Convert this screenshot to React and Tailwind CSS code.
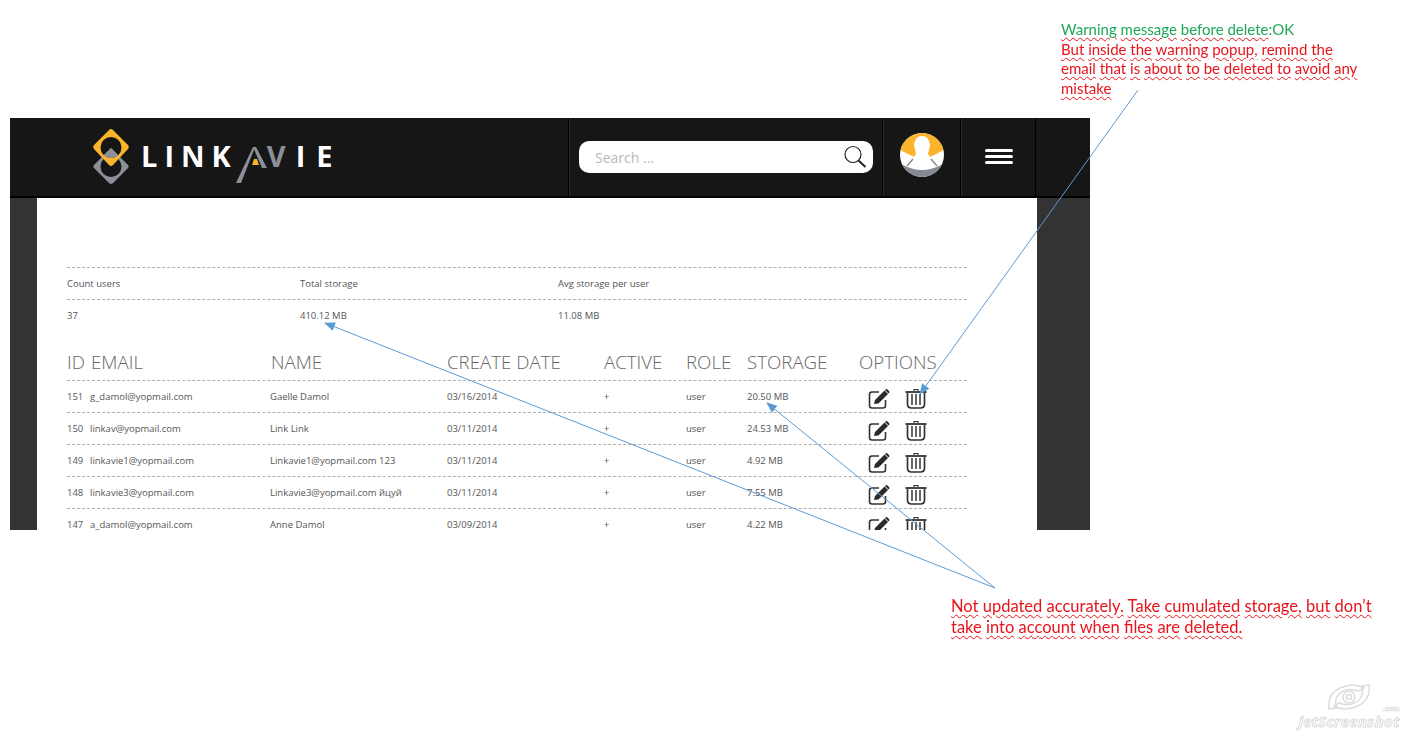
import React from 'react';

const users = [
    { id: 151, email: 'g_damol@yopmail.com', name: 'Gaelle Damol', date: '03/16/2014', storage: '20.50 MB' },
    { id: 150, email: 'linkav@yopmail.com', name: 'Link Link', date: '03/11/2014', storage: '24.53 MB' },
    { id: 149, email: 'linkavie1@yopmail.com', name: 'Linkavie1@yopmail.com 123', date: '03/11/2014', storage: '4.92 MB' },
    { id: 148, email: 'linkavie3@yopmail.com', name: 'Linkavie3@yopmail.com йцуй', date: '03/11/2014', storage: '7.55 MB' },
    { id: 147, email: 'a_damol@yopmail.com', name: 'Anne Damol', date: '03/09/2014', storage: '4.22 MB' },
];

const columns = 'grid grid-cols-[24px_180px_176px_157px_82px_61px_112px_108px]';

const LogoMark = () => (
    <svg width="38" height="56" viewBox="0 0 38 56" className="shrink-0">
        <path fillRule="evenodd" fill="#8b8f98" d="M19 19 L36 36 Q37.5 37.500 36 39 L21 54 Q19 56 17 54 L2 39 Q0.500 37.500 2 36 Z M19 27 A10.500 10.500 0 1 0 19 48 A10.500 10.500 0 1 0 19 27 Z" />
        <path fillRule="evenodd" fill="#fbb42c" d="M17 1 Q19 -1 21 1 L36 16 Q37.500 18 36 20 L21 36 Q19 38 17 36 L2 20 Q0.500 18 2 16 Z M19 8 A10.500 10.500 0 1 0 19 29 A10.500 10.500 0 1 0 19 8 Z" />
        <path fill="#8b8f98" d="M19 19 L26 26 Q24 29 19 29 Q14 29 12 26 Z" />
    </svg>
);

// the stylised A of the wordmark, a slash with a small yellow wedge
const LogoSlash = () => (
    <svg width="37" height="38" viewBox="0 0 37 38" className="shrink-0 mt-[9px] -ml-[4px]">
        <path d="M2 37 L19 1 L21 1 L7 37 Z" fill="#8b8f98" />
        <path d="M19 1 L22 1 L33 22 L28 22 Z" fill="#8b8f98" />
        <path d="M20 13 L23 13 L25 19 L18 19 Z" fill="#fbb42c" />
    </svg>
);

const Avatar = () => (
    <svg width="44" height="44" viewBox="0 0 44 44">
        <defs>
            <clipPath id="avatar-clip"><circle cx="22" cy="22" r="22" /></clipPath>
        </defs>
        <g clipPath="url(#avatar-clip)">
            <rect width="44" height="44" fill="#ffffff" />
            <path d="M0 0 H44 V17 L30 24 H14 L0 17 Z" fill="#fbb42c" />
            <path d="M14 12 Q15 3 22 3 Q29 3 30 12 L28 21 L31 25 L22 34 L13 25 L16 21 Z" fill="#ffffff" />
            <path d="M7 33 L13 26 M37 33 L31 26" stroke="#868a93" strokeWidth="1.500" fill="none" />
            <path d="M3 32 Q22 42 41 32 L44 44 H0 Z" fill="#868a93" />
        </g>
    </svg>
);

const EditIcon = () => (
    <svg width="22" height="22" viewBox="0 0 22 22">
        <path d="M11 4 H4 Q1.500 4 1.500 6.500 V17.500 Q1.500 20 4 20 H15 Q17.500 20 17.500 17.500 V12" fill="none" stroke="#333" strokeWidth="1.600" />
        <path d="M6 16 L7 12 L16.500 2.500 L20 6 L10.500 15.500 Z" fill="#2b2b2b" />
        <path d="M17.500 1.500 Q18.500 0.500 19.500 1.500 L21 3 Q22 4 21 5 L20.500 5.500 L17 2 Z" fill="#2b2b2b" />
    </svg>
);

const TrashIcon = () => (
    <svg width="22" height="22" viewBox="0 0 22 22" fill="none" stroke="#333">
        <path d="M0.500 4 H21.500" strokeWidth="1.800" />
        <path d="M9 3 V1.500 H13 V3" strokeWidth="1.200" />
        <path d="M2.500 5 V16 Q2.500 20 6.500 20 H15.500 Q19.500 20 19.500 16 V5" strokeWidth="1.700" />
        <path d="M7 6 V17 M11 6 V17 M15 6 V17" strokeWidth="1.500" />
    </svg>
);

const SearchIcon = () => (
    <svg width="24" height="24" viewBox="0 0 24 24" fill="none" stroke="#222">
        <circle cx="10" cy="9.500" r="8" strokeWidth="1.200" />
        <path d="M15.500 15.500 L22.500 22" strokeWidth="2" />
    </svg>
);

// spell checker squiggle, word by word so the gaps stay clean
const Squiggly = ({ text }) =>
    text.split(' ').map((word, i) => (
        <span key={i}>
            <span className="underline decoration-wavy decoration-1 underline-offset-2 decoration-[#e8141c]">{word}</span>{' '}
        </span>
    ));

const Arrows = () => (
    <svg width="1406" height="734" viewBox="0 0 1406 734" className="absolute inset-0 pointer-events-none">
        <defs>
            <marker id="arrow-head" markerWidth="11" markerHeight="9" refX="10" refY="4.500" orient="auto" markerUnits="userSpaceOnUse">
                <path d="M0 0 L11 4.500 L0 9 Z" fill="#5b9bd5" />
            </marker>
        </defs>
        <g stroke="#5b9bd5" strokeWidth="1" fill="none">
            <line x1="1138" y1="90" x2="920" y2="394" markerEnd="url(#arrow-head)" />
            <line x1="995" y1="588" x2="325" y2="323" markerEnd="url(#arrow-head)" />
            <line x1="995" y1="588" x2="767" y2="403" markerEnd="url(#arrow-head)" />
        </g>
    </svg>
);

const Watermark = () => (
    <div className="absolute left-[1296px] top-[682px] w-[106px] flex flex-col items-center">
        <svg width="46" height="30" viewBox="0 0 46 30" fill="none" stroke="#dcdcdc" strokeWidth="1.500">
            <path d="M3 27 Q1 12 14 6 Q28 0 38 6 L33 9 Q22 5 14 11 Q8 16 10 26 Z" />
            <path d="M43 3 Q45 18 32 24 Q18 30 8 24 L13 21 Q24 25 32 19 Q38 14 36 4 Z" />
            <circle cx="23" cy="15" r="6" />
            <circle cx="23" cy="15" r="2.500" />
        </svg>
        <div className="relative font-['Open_Sans',sans-serif] italic font-bold text-[15px] leading-[18px] tracking-[0.3px] text-white [-webkit-text-stroke:1px_#dcdcdc]">
            jetScreenshot
            <span className="absolute right-0 -top-[7px] text-[7px] leading-[7px] tracking-normal not-italic [-webkit-text-stroke:0.5px_#d4d4d4]">.com</span>
        </div>
    </div>
);

const App = () => {
    return (
        <div className="relative w-[1406px] h-[734px] overflow-hidden bg-white pl-[10px] pt-[118px] font-['Open_Sans',sans-serif]">
            <div className="w-[1080px] h-[412px] overflow-hidden bg-[#333333] flex flex-col">
                <header className="h-[80px] shrink-0 flex bg-[#161616] border-b-2 border-black">
                    <div className="w-[558px] flex items-start pl-[82px] pt-[11px]">
                        <LogoMark />
                        <div className="flex items-start ml-[11px] mt-[8px] text-white font-bold text-[29px] leading-[38px] tracking-[7px]">
                            <span>LINK</span>
                            <LogoSlash />
                            <span className="-ml-[4px] text-[#8b8f98]">V</span>
                            <span className="ml-[3px]">I</span>
                            <span className="ml-[4px]">E</span>
                        </div>
                    </div>
                    <div className="w-[314px] border-l border-l-black shadow-[inset_1px_0_0_#2a2a2a] flex items-start pl-[10px] pt-[23px]">
                        <div className="w-[294px] h-[32px] rounded-[10px] bg-white flex items-center justify-between pl-[16px] pr-[6px]">
                            <span className="text-[14px] text-[#b8b8b8]">Search ...</span>
                            <SearchIcon />
                        </div>
                    </div>
                    <div className="w-[78px] border-l border-l-black shadow-[inset_1px_0_0_#2a2a2a] flex items-start justify-center pt-[15px]">
                        <Avatar />
                    </div>
                    <div className="w-[76px] border-l border-l-black border-r border-r-black shadow-[inset_1px_0_0_#2a2a2a] flex flex-col items-center gap-[3px] pl-[2px] pt-[31px]">
                        <div className="w-[28px] h-[3px] rounded-full bg-white" />
                        <div className="w-[28px] h-[3px] rounded-full bg-white" />
                        <div className="w-[28px] h-[3px] rounded-full bg-white" />
                    </div>
                </header>
                <div className="flex-1 ml-[27px] w-[1000px] bg-white pl-[30px] pt-[69px]">
                    <div className="w-[900px] text-[9.500px] text-[#555555]">
                        <div className="grid grid-cols-[233px_258px_1fr] h-[32px] pt-[2px] items-center border-t border-dashed border-[#b0b0b0]">
                            <span>Count users</span>
                            <span>Total storage</span>
                            <span>Avg storage per user</span>
                        </div>
                        <div className="grid grid-cols-[233px_258px_1fr] h-[32px] pt-[2px] items-center border-t border-dashed border-[#b0b0b0]">
                            <span>37</span>
                            <span>410.12 MB</span>
                            <span>11.08 MB</span>
                        </div>
                        <div className={`${columns} h-[49px] items-end pb-[6px] font-light text-[18.700px] leading-[24px] text-[#666666]`}>
                            <span>ID</span>
                            <span>EMAIL</span>
                            <span>NAME</span>
                            <span>CREATE DATE</span>
                            <span>ACTIVE</span>
                            <span>ROLE</span>
                            <span>STORAGE</span>
                            <span>OPTIONS</span>
                        </div>
                        {users.map((user) => (
                            <div key={user.id} className={`${columns} h-[32px] pt-[2px] items-center border-t border-dashed border-[#b0b0b0]`}>
                                <span>{user.id}</span>
                                <span className="-ml-px">{user.email}</span>
                                <span className="-ml-px">{user.name}</span>
                                <span>{user.date}</span>
                                <span className="w-fit will-change-transform">+</span>
                                <span>user</span>
                                <span>{user.storage}</span>
                                <div className="flex gap-[15px] pl-[9px] pt-[2px]">
                                    <EditIcon />
                                    <TrashIcon />
                                </div>
                            </div>
                        ))}
                    </div>
                </div>
            </div>

            <Arrows />

            <div className="absolute left-[1061px] top-[20px] w-[320px] font-['Lato',sans-serif] text-[15px] leading-[19.5px] text-[#e8141c]">
                <div className="text-[#1fa85a]">
                    <Squiggly text="Warning message before" />
                    <span className="underline decoration-wavy decoration-1 underline-offset-2 decoration-[#e8141c]">delete</span>:OK
                </div>
                <div><Squiggly text="But inside the warning popup, remind the" /></div>
                <div><Squiggly text="email that is about to be deleted to avoid any" /></div>
                <div><Squiggly text="mistake" /></div>
            </div>

            <div className="absolute left-[951px] top-[596px] w-[440px] font-['Lato',sans-serif] text-[16.500px] leading-[21px] text-[#e8141c]">
                <Squiggly text="Not updated accurately. Take cumulated storage, but don’t take into account when files are deleted." />
            </div>

            <Watermark />
        </div>
    );
};

export default App;
